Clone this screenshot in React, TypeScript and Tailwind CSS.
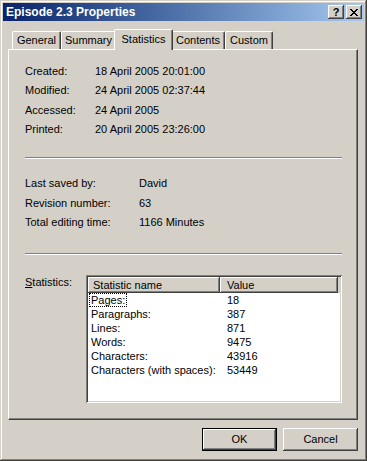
import React from "react";

const raised =
  "shadow-[inset_-1px_-1px_#404040,inset_1px_1px_#ffffff,inset_-2px_-2px_#808080,inset_2px_2px_#d4d0c8]";

function CaptionButton({ children, className = "" }: { children: React.ReactNode; className?: string }) {
  return (
    <div
      className={`w-[16px] h-[14px] bg-[#d4d0c8] flex items-center justify-center text-black ${raised} ${className}`}
    >
      {children}
    </div>
  );
}

function Tab({ label, selected = false, w }: { label: string; selected?: boolean; w: string }) {
  if (selected) {
    return (
      <div
        className={`${w} h-[21px] -mb-px -mx-[2px] relative z-10 bg-[#d4d0c8] border-l border-t border-white rounded-tl-[2px] rounded-tr-[2px] border-r border-r-[#404040] shadow-[inset_-1px_0_#808080] flex items-center justify-center pb-[2px]`}
      >
        {label}
      </div>
    );
  }
  return (
    <div
      className={`${w} h-[18px] bg-[#d4d0c8] border-l border-t border-white rounded-tl-[2px] rounded-tr-[2px] border-r border-r-[#404040] shadow-[inset_-1px_0_#808080] flex items-center justify-center`}
    >
      {label}
    </div>
  );
}

function Row({ label, value, lw }: { label: string; value: string; lw: string }) {
  return (
    <div className="flex h-[19.6px] items-center">
      <span className={lw}>{label}</span>
      <span>{value}</span>
    </div>
  );
}

function Separator({ className = "" }: { className?: string }) {
  return <div className={`h-[2px] border-t border-[#808080] border-b border-b-white ${className}`} />;
}

const stats = [
  ["Pages:", "18"],
  ["Paragraphs:", "387"],
  ["Lines:", "871"],
  ["Words:", "9475"],
  ["Characters:", "43916"],
  ["Characters (with spaces):", "53449"],
];

export default function App() {
  return (
    <div className="w-[367px] h-[461px] bg-[#d4d0c8] p-[3px] flex flex-col text-[11px] text-black font-['Liberation_Sans',Arial,sans-serif] shadow-[inset_-1px_-1px_#404040,inset_1px_1px_#d4d0c8,inset_-2px_-2px_#808080,inset_2px_2px_#ffffff]">
      {/* Title bar */}
      <div className="h-[18px] flex items-center bg-linear-to-r from-[#0a246a] to-[#a6caf0] pl-[3px] pr-[2px]">
        <span className="flex-1 text-white font-bold text-[12px] leading-none">Episode 2.3 Properties</span>
        <CaptionButton>
          <span className="font-bold text-[11px] leading-none">?</span>
        </CaptionButton>
        <CaptionButton className="ml-[2px]">
          <svg width="8" height="7" viewBox="0 0 8 7" shapeRendering="crispEdges">
            <path d="M0 0h2v1h-2zM6 0h2v1h-2zM1 1h2v1h-2zM5 1h2v1h-2zM2 2h4v1h-4zM3 3h2v1h-2zM2 4h4v1h-4zM1 5h2v1h-2zM5 5h2v1h-2zM0 6h2v1h-2zM6 6h2v1h-2z" fill="#000" />
          </svg>
        </CaptionButton>
      </div>

      {/* Body */}
      <div className="pl-[5px] pr-[6px] pt-[8px] flex flex-col">
        {/* Tabs */}
        <div className="flex items-end h-[20px] pl-[4px]">
          <Tab label="General" w="w-[49px]" />
          <Tab label="Summary" w="w-[55px]" />
          <Tab label="Statistics" w="w-[59px]" selected />
          <Tab label="Contents" w="w-[54px]" />
          <Tab label="Custom" w="w-[48px]" />
        </div>

        {/* Panel */}
        <div className="h-[371px] border border-t-white border-l-white border-r-[#404040] border-b-[#404040] shadow-[inset_-1px_-1px_#808080] pl-[16px] pr-[15px] pt-[11px] flex flex-col">
          <div className="flex flex-col">
            <Row label="Created:" value="18 April 2005 20:01:00" lw="w-[70px]" />
            <Row label="Modified:" value="24 April 2005 02:37:44" lw="w-[70px]" />
            <Row label="Accessed:" value="24 April 2005" lw="w-[70px]" />
            <Row label="Printed:" value="20 April 2005 23:26:00" lw="w-[70px]" />
          </div>

          <Separator className="mt-[18px]" />

          <div className="flex flex-col mt-[14px]">
            <Row label="Last saved by:" value="David" lw="w-[114px]" />
            <Row label="Revision number:" value="63" lw="w-[114px]" />
            <Row label="Total editing time:" value="1166 Minutes" lw="w-[114px]" />
          </div>

          <Separator className="mt-[21px]" />

          <div className="flex mt-[20px]">
            <div className="w-[61px] leading-[14px]">
              <span className="underline">S</span>tatistics:
            </div>
            <div className="w-[256px] h-[128px] bg-white p-[2px] shadow-[inset_1px_1px_#808080,inset_-1px_-1px_#ffffff,inset_2px_2px_#404040,inset_-2px_-2px_#d4d0c8]">
              <div className="flex h-[16px] bg-[#d4d0c8]">
                <div className={`w-[132px] pl-[5px] flex items-center ${raised}`}>Statistic name</div>
                <div className={`w-[118px] pl-[7px] flex items-center ${raised}`}>Value</div>
              </div>
              {stats.map(([name, value], i) => (
                <div key={name} className="flex h-[14px] items-center mt-0 first:mt-px">
                  <div className="w-[132px] pl-[1px]">
                    <span
                      className={
                        i === 0
                          ? "border border-dotted border-black px-[1px] leading-[12px] inline-block"
                          : "pl-[2px]"
                      }
                    >
                      {name}
                    </span>
                  </div>
                  <div className="pl-[7px]">{value}</div>
                </div>
              ))}
            </div>
          </div>
        </div>

        {/* Buttons */}
        <div className="flex justify-end gap-[6px] mt-[8px]">
          <div className="w-[75px] h-[23px] border border-black">
            <div className={`w-full h-full bg-[#d4d0c8] flex items-center justify-center ${raised}`}>OK</div>
          </div>
          <div className={`w-[75px] h-[23px] bg-[#d4d0c8] flex items-center justify-center ${raised}`}>Cancel</div>
        </div>
      </div>
    </div>
  );
}
